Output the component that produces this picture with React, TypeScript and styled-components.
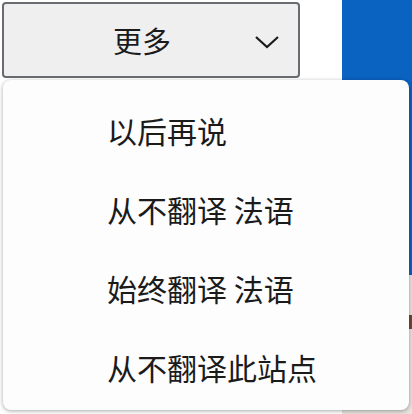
import styled, { createGlobalStyle } from 'styled-components';

const GlobalStyle = createGlobalStyle`
  body {
    margin: 0;
    background: #ffffff;
    font-family: "Noto Sans CJK SC", "Noto Sans", sans-serif;
  }
`;

const S = {
  Page: styled.div`
    position: relative;
    width: 412px;
    height: 414px;
    overflow: hidden;
    display: flex;
    background: #ffffff;
  `,
  Left: styled.div`
    width: 342px;
    padding: 2px 0 0 2px;
    box-sizing: border-box;
  `,
  MoreButton: styled.div`
    width: 298px;
    height: 76px;
    box-sizing: border-box;
    border: 2px solid #696c70;
    border-radius: 4px;
    background: #efefef;
    display: flex;
    align-items: center;
    padding: 0 18px 0 109px;
    color: #1b1b1b;
    font-size: 29px;
  `,
  Chevron: styled.svg`
    margin-left: auto;
    margin-top: 4px;
    width: 26px;
    height: 16px;
  `,
  Side: styled.div`
    flex: 1;
    display: flex;
    flex-direction: column;
  `,
  BluePanel: styled.div`
    height: 275px;
    background: #0a62c1;
  `,
  PhotoPanel: styled.div`
    flex: 1;
    background: #e7e2dd;
    display: flex;
    justify-content: flex-end;
    padding-top: 40px;
  `,
  PhotoMark: styled.div`
    width: 4px;
    height: 14px;
    background: #6b4a36;
  `,
  Menu: styled.div`
    position: absolute;
    left: 3px;
    top: 80px;
    width: 406px;
    height: 330px;
    box-sizing: border-box;
    padding-top: 10px;
    background: #fdfdfe;
    border-radius: 8px;
    box-shadow: 0 1px 4px rgba(0, 0, 0, 0.35);
  `,
  Item: styled.div`
    height: 79px;
    display: flex;
    align-items: center;
    padding-left: 104px;
    color: #1b1b1b;
    font-size: 30px;
    white-space: pre;
  `,
};

const items = ['以后再说', '从不翻译 法语', '始终翻译 法语', '从不翻译此站点'];

const App = () => {
  return (
    <>
      <GlobalStyle />
      <S.Page>
        <S.Left>
          <S.MoreButton>
            <span>更多</span>
            <S.Chevron viewBox="0 0 26 16">
              <path d="M2 3 L13 13 L24 3" fill="none" stroke="#1b1b1b" strokeWidth="2.2" />
            </S.Chevron>
          </S.MoreButton>
        </S.Left>
        <S.Side>
          <S.BluePanel />
          <S.PhotoPanel>
            <S.PhotoMark />
          </S.PhotoPanel>
        </S.Side>
        <S.Menu>
          {items.map((label) => (
            <S.Item key={label}>{label}</S.Item>
          ))}
        </S.Menu>
      </S.Page>
    </>
  );
};

export default App;
